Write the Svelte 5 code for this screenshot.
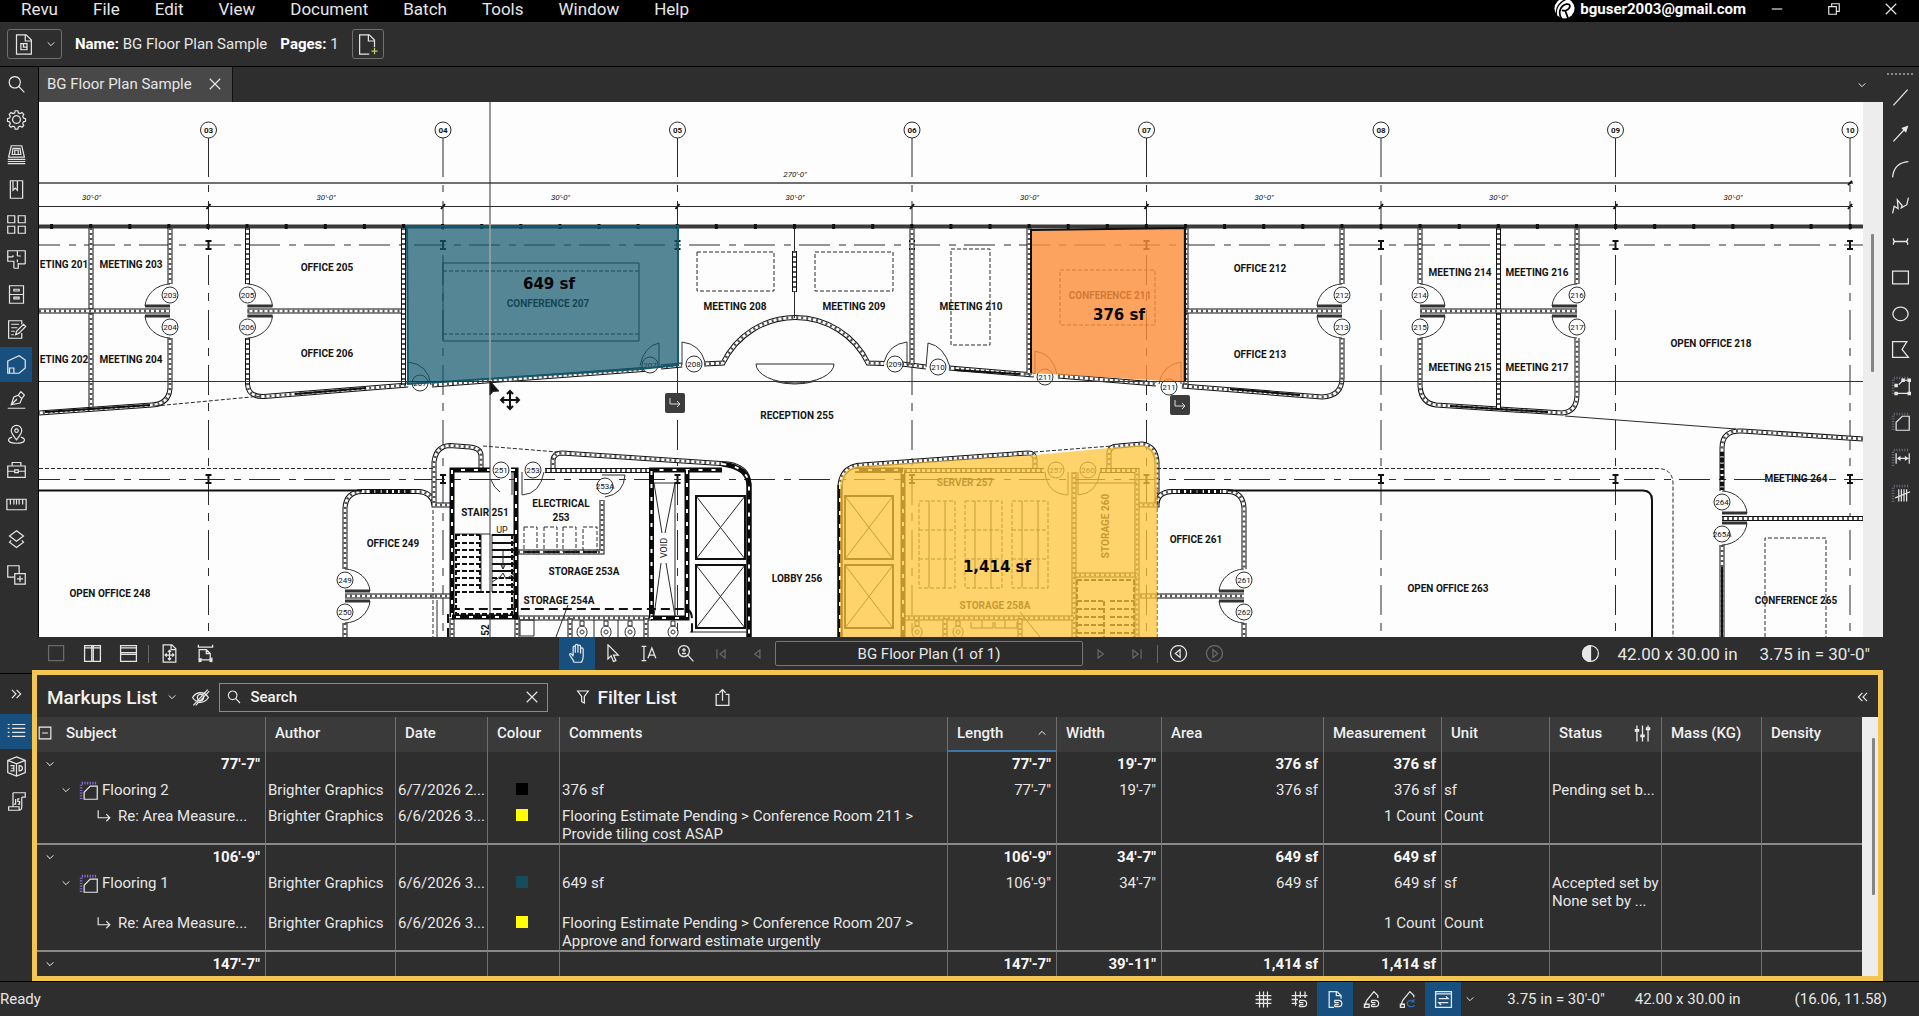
<!--
  Revu workspace — plan canvas with tool rails, page navigation and the Markups List.
-->
<script lang="ts">
  const menus = ['Revu', 'File', 'Edit', 'View', 'Document', 'Batch', 'Tools', 'Window', 'Help'];

  // Stroke paths on a 24px grid.
  const icons: Record<string, string> = {
    search: 'M10 3a6.5 6.5 0 1 0 .01 0M14.8 14.5L21 21',
    gear: 'M12 7.500a4.500 4.500 0 1 0 .01 0M10.500 2h3l.6 2.500 2 .8 2.200-1.300 2 2-1.200 2.300.8 2 2.400.7v3l-2.400.7-.8 2 1.200 2.200-2 2-2.200-1.200-2 .8-.6 2.500h-3l-.6-2.500-2-.8-2.200 1.200-2-2 1.200-2.200-.8-2L1.700 14v-3l2.400-.7.8-2L3.700 6l2-2 2.200 1.300 2-.8z',
    stamp: 'M6 2h12l3 13H3zM8 5h8l1 7H7zM10 7h4v5h-4zM2 17.500h20M2 20h20M2 22.500h20',
    bookmark: 'M5 2h14v20H5zM8 2v11l2.500-2.500L13 13V2',
    thumbs: 'M2 2h8v8H2zM14 2h8v8h-8zM2 14h8v8H2zM14 14h8v8h-8z',
    spaces: 'M22 17h-5M22 17V2H2v12h4M13 12v3M2 14v-1M9 22v-8H5M9 22h5v-5h3M13 2v6M8 7v2M13 8h4M2 9h6M14 17v-1',
    cabinet: 'M4 2h16v20H4zM4 12h16M9 6h6v2H9zM9 15h6v2H9z',
    form: 'M18 6V2H3v20h15v-6M6 6h9M6 10h7M6 14h4M6 18h3M11 18l1-4 8-8 2.500 2.500-8 8z',
    measure: 'M2 8L15 2l7 5v9l-7 6H2zM4 22v-6h5v6',
    pen: 'M2 22h20M6 18l3-9 5-2 4 4-2 5zM14 7l3-4 4 4-3 4M6 18l6-6M12 11v2',
    pin: 'M12 18c-4-5-6-7-6-10.500a6 6 0 0 1 12 0c0 3.500-2 5.500-6 10.500zM12 5.500a2 2 0 1 0 .01 0M7 15c-7 2-5 7 5 7s12-5 5-7',
    toolbox: 'M2 8h20v13H2zM7 8V4h10v4M2 14h8M14 14h8M10 12.500h4v3h-4z',
    ruler: 'M1 6h22v12H1zM5 6v6M9 6v6M12 6v6M15 6v6M19 6v6',
    layers: 'M12 2l8 6-8 6-8-6zM6 13l-2 2 8 6 8-6-2-2',
    sets: 'M10 15H2V2h13v9M10 11h12v12H10zM16 13.500v7M12.500 17h7',
    list: 'M2 4h2M2 8.500h2M2 13h2M2 17.500h2M7 4h15M7 8.500h15M7 13h15M7 17.500h15',
    cube: 'M12 1l10 4v14l-10 4-10-4V5zM2 5l10 4 10-4M12 9v14M5 11h4v6H5M6 14h3M15 11v6c5 0 5-6 0-6z',
    script: 'M8 2h14v5h-4M8 2v16H3v4h12c3 0 3-2 3-4V7M8 18h7v4M11 9v6H9M15.500 9h-2v3h2v3h-2',
    line: 'M3 22L21 2',
    arrow: 'M3 22L17 7',
    arc: 'M2 22C3 10 9 3 22 2',
    polyline: 'M2 22l2-9 5 3-1-11 6 7-1 3 7-4 2-9',
    dimension: 'M3 12h18M3 8v2l2 2-2 2v2M21 8v2l-2 2 2 2v2',
    rect: 'M2 4h20v16H2z',
    ellipse: 'M12 4a9.500 8.500 0 1 0 .01 0',
    polygon: 'M2 2h18l-6 10 8 10H2z',
    chevron: 'M4 8l8 8 8-8',
    up: 'M4 16l8-8 8 8',
    close: 'M3 3l18 18M21 3L3 21',
    page: 'M4 1h11l6 6v16H4zM14 1v7h7',
    hidden: 'M2 12c5-8 15-8 20 0-5 8-15 8-20 0zM12 8a4 4 0 1 0 .01 0M3 22L21 2M6 22L23 4',
    funnel: 'M4 3h16l-6 8v10l-4-2v-8z',
    share: 'M8 8H4v14h16V8h-4M12 16V2M8 6l4-4 4 4',
    sliders: 'M5 2v20M12 2v20M19 2v20M3 7h4v2H3zM10 14h4v2h-4zM17 5h4v2h-4z',
    square: 'M2 2h19v19H2z',
    vsplit: 'M2 2h20v20H2zM11 2v20M13 2v20M2 5h20',
    hsplit: 'M2 2h20v20H2zM2 11h20M2 13h20M2 5h20',
    fitPage: 'M4 1h11l5 5v17H4zM14 1v6h6M12 8v12M6.500 14h11M10 10l2-2 2 2M10 18l2 2 2-2M8.500 12l-2 2 2 2M15.500 12l2 2-2 2',
    fitWidth: 'M3 1v3h18V1M4 17V7h9l5 5v6M13 7v5h5M4 17v6M20 17v6M4 20h16M7 18l-3 2 3 2M17 18l3 2-3 2',
    hand: 'M8 22c-1-4-5-7-5-9 1-2 3 0 4 2V5c0-2 2.500-2 2.500 0v6-8c0-2 3-2 3 0v8-7c0-2 3-2 3 0v8-5c0-2 3-2 3 0v8c0 4-1 5-2 7z',
    pointer: 'M5 1v18l4-4 3 7 3-1-3-7h6z',
    textSelect: 'M2 3h6M5 3v18M2 21h6M10 18l5-13 5 13M12 14h6',
    zoom: 'M10 2a7 7 0 1 0 .01 0M15 14l7 8M10 5v5M7.500 7.500h5M7.500 12h5',
    first: 'M5 4v16M19 5l-9 7 9 7z',
    prev: 'M17 5l-9 7 9 7z',
    next: 'M7 5l9 7-9 7z',
    last: 'M19 4v16M5 5l9 7-9 7z',
    back: 'M12 2a10 10 0 1 0 .01 0M14 7l-6 5 6 5z',
    forward: 'M12 2a10 10 0 1 0 .01 0M10 7l6 5-6 5z',
    grid: 'M7 2v20M12 2v20M17 2v20M2 7h20M2 12h20M2 17h20',
    snapGrid: 'M7 2v18M13 2v8M19 2v8M2 7h20M2 12h8M2 17h7M12 13h5a4 4 0 0 1 0 8h-5M12 16h5M12 18.500h5M12 13v3M12 18.500V21',
    snapPage: 'M10 22H4V2h10l5 5v4M13 2v5h6M11 13h5a4 4 0 0 1 0 8h-5M11 16h5M11 18.500h5M11 13v3M11 18.500V21',
    snapMark: 'M3 21l3-8 9-11 5 5v3M3 18h6v4H3zM12 13h5a4 4 0 0 1 0 8h-5M12 16h5M12 18.500h5M12 13v3M12 18.500V21',
    reuse: 'M3 21l3-8 9-11 5 5v2M3 18h5v4H3z',
    sync: 'M2 2h20v20H2zM2 5h20M6 11h12l-3-3M18 16H6l3 3',
    right2: 'M5 5l7 7-7 7M13 5l7 7-7 7',
    left2: 'M11 5l-7 7 7 7M19 5l-7 7 7 7',
    reply: 'M2 2v13h19M16 9l6 6-6 6',
    minus: 'M3 12h18',
    restore: 'M3 8h13v13H3zM8 8V3h13v13h-5',
    collapse: 'M2 2h20v20H2zM7 12h10',
  };

  const panels = [
    ['search', 'Search'], ['gear', 'Properties'], ['stamp', 'Tool Chest'], ['bookmark', 'Bookmarks'],
    ['thumbs', 'Thumbnails'], ['spaces', 'Spaces'], ['cabinet', 'File Access'], ['form', 'Forms'],
    ['measure', 'Measurements'], ['pen', 'Signatures'], ['pin', 'Places'], ['toolbox', 'Studio'],
    ['ruler', 'Scale'], ['layers', 'Layers'], ['sets', 'Sets'],
  ];

  const tools = [
    ['line', 'Line'], ['arrow', 'Arrow'], ['arc', 'Arc'], ['polyline', 'Polyline'],
    ['dimension', 'Dimension'], ['rect', 'Rectangle'], ['ellipse', 'Ellipse'], ['polygon', 'Polygon'],
  ];

  // Measurement tools share the little ruler ticks along the top and left.
  // The last entry holds the filled parts.
  const measureTools = [
    ['M10 11l5-5h7v15H7', 'Perimeter', 'M5 10h4v4H5zM13 4h4v4h-4zM20 4h4v4h-4zM5 19h4v4H5zM20 19h4v4h-4z'],
    ['M14 6h8v16H7v-9z', 'Area', ''],
    ['M7 7v12M22 7v12M9 13h12', 'Length', 'M8 13l4-3v6zM21 13l-4-3v6z'],
    ['M10 7v14M13 7v14M16 7v14M19 7v14M6 17L23 10', 'Count', ''],
  ];
  const ticks = 'M5 2v3M8 2v3M11 2v3M14 2v3M17 2v3M20 2v3M2 6h3M2 9h3M2 12h3M2 15h3M2 18h3M2 21h3';

  let activePanel = $state('measure');

  const cols = [208.5, 443, 677.5, 912, 1146.5, 1381, 1615.5, 1850];
  const colNames = ['03', '04', '05', '06', '07', '08', '09', '10'];
  const mullions = Array.from({ length: 47 }, (_, i) => 51.6 + i * 39.1);

  const walls = [
    'M91 228V408', 'M170 228V284', 'M170 338V388Q169 404 152 405L39 413', 'M39 311H170',
    'M247.500 228V284', 'M247.500 338V384Q248 397 264 396.500L408 385', 'M247.500 311H403', 'M403.500 228V385',
    'M432 385L650 369', 'M661 367L682 365', 'M704 364L723 363A80.500 80.500 0 0 1 868 363L884 363.500',
    'M902 364L926 367', 'M794.500 251V292', 'M912 228V365', 'M949 368L1034 375', 'M1029 228V375',
    'M1058 376L1156 384', 'M1182 386L1322 397Q1342 396 1342 378V338', 'M1186 228V385', 'M1186 311H1342',
    'M1342 228V284', 'M1420 228V284', 'M1420 338V386Q1421 403 1436 405L1562 413Q1577 412 1577 394V338',
    'M1577 228V284', 'M1498.500 228V408', 'M1420 311H1577', 'M1863 439L1742 431Q1722 430 1722 448V491',
    'M1722 518.500H1863', 'M1722 545V637', 'M345 569V508Q346 492 362 491.500H418Q432 492 434 505',
    'M452 505H434V462Q436 446 450 445.500L470 447Q481 448 481 456V470', 'M345 596H452', 'M345 623V637',
    'M553 470V460Q554 453 562 453L728 464Q748 467 749 484V637', 'M545 470.500H652', 'M518 552H602V500',
    'M518 618H652', 'M570 618V637', 'M646 618V637', 'M452 618V637', 'M517 618V637',
    'M840 637V485Q842 466 862 465L1028 453Q1035 453 1035 460V470', 'M855 470.500H1044', 'M1109 470V452Q1110 446 1118 446L1142 444Q1156 446 1157 462V505H1138',
    'M1100 470.500H1137V637', 'M1074 472V637', 'M1074 575H1137', 'M903 618H1074', 'M945 618V637', 'M1020 618V637',
    'M1140 596H1244', 'M1157 503Q1158 492 1172 491.500H1228Q1243 492 1244 508V569', 'M1244 623V637',
  ];

  // Fire-rated walls are drawn solid with a broken white core.
  const ratedWalls = [
    'M452 617V470H490', 'M511 470H516V617H452', 'M651.500 618V470H722', 'M687 470V618H651', 'M903 470V637',
    'M722 464Q748 467 749 485V637', 'M840 485V637', 'M855 470H903',
  ];

  // Paired doors either side of a partition; dir points into the room.
  const doorPairs = [
    { x: 170, y: 311, dir: -1, a: '203', b: '204' },
    { x: 247.5, y: 311, dir: 1, a: '205', b: '206' },
    { x: 1342, y: 311, dir: -1, a: '212', b: '213' },
    { x: 1420, y: 311, dir: 1, a: '214', b: '215' },
    { x: 1577, y: 311, dir: -1, a: '216', b: '217' },
    { x: 345, y: 596, dir: 1, a: '249', b: '250' },
    { x: 1244, y: 596, dir: -1, a: '261', b: '262' },
    { x: 1722, y: 518, dir: 1, a: '264', b: '265A' },
  ];

  const doors = [
    { x: 420, y: 383, n: '207', d: 'M408 362Q428 364 431 385' },
    { x: 650, y: 365, n: '207', d: 'M659 368V343Q644 346 640 366' },
    { x: 694, y: 364, n: '208', d: 'M682 365V342Q700 344 705 362' },
    { x: 895, y: 364, n: '209', d: 'M907 365V342Q889 344 884 362' },
    { x: 938, y: 367, n: '210', d: 'M926 367L928 343Q944 346 950 367' },
    { x: 1045, y: 377, n: '211', d: 'M1035 374V351Q1053 354 1057 374' },
    { x: 1169, y: 387, n: '211', d: 'M1181 384V362Q1162 365 1159 384' },
    { x: 501, y: 470, n: '251', d: 'M512 472V495M491 480Q494 488 500 492' },
    { x: 533, y: 470, n: '253', d: 'M522 472V495Q540 494 544 472' },
    { x: 605, y: 486, n: '253A', d: 'M602 475H625Q624 494 605 497' },
    { x: 1056, y: 470, n: '257', d: 'M1068 472V495Q1047 494 1045 472' },
    { x: 1088, y: 470, n: '260', d: 'M1078 472V495Q1097 494 1100 472' },
  ];

  const rooms: [string, number, number][] = [
    ['ETING 201', 64, 264], ['MEETING 203', 131, 264], ['ETING 202', 64, 359], ['MEETING 204', 131, 359],
    ['OFFICE 205', 327, 267], ['OFFICE 206', 327, 353], ['CONFERENCE 207', 548, 303], ['MEETING 208', 735, 306],
    ['MEETING 209', 854, 306], ['MEETING 210', 971, 306], ['CONFERENCE 211', 1110, 295], ['OFFICE 212', 1260, 268],
    ['OFFICE 213', 1260, 354], ['MEETING 214', 1460, 272], ['MEETING 216', 1537, 272], ['MEETING 215', 1460, 367],
    ['MEETING 217', 1537, 367], ['OPEN OFFICE 218', 1711, 343], ['RECEPTION 255', 797, 415], ['OPEN OFFICE 248', 110, 593],
    ['OFFICE 249', 393, 543], ['STAIR 251', 485, 512], ['ELECTRICAL', 561, 503], ['253', 561, 517],
    ['STORAGE 253A', 584, 571], ['STORAGE 254A', 559, 600], ['LOBBY 256', 797, 578], ['SERVER 257', 965, 482],
    ['STORAGE 258A', 995, 605], ['OFFICE 261', 1196, 539], ['OPEN OFFICE 263', 1448, 588], ['MEETING 264', 1796, 478],
    ['CONFERENCE 265', 1796, 600],
  ];

  const stairTreads = [535, 543, 550, 557, 564, 571, 578, 585, 592];
  const fixtures = [582, 606, 630, 673, 917, 958];

  interface Row {
    kind: 'group' | 'markup' | 'reply';
    subject: string;
    author?: string;
    date?: string;
    colour?: string;
    comments?: string[];
    length?: string;
    width?: string;
    area?: string;
    measurement?: string;
    unit?: string;
    status?: string[];
  }

  const rows: Row[] = [
    { kind: 'group', subject: `77'-7"`, length: `77'-7"`, width: `19'-7"`, area: '376 sf', measurement: '376 sf' },
    { kind: 'markup', subject: 'Flooring 2', author: 'Brighter Graphics', date: '6/7/2026 2...', colour: '#000000', comments: ['376 sf'], length: `77'-7"`, width: `19'-7"`, area: '376 sf', measurement: '376 sf', unit: 'sf', status: ['Pending set b...'] },
    { kind: 'reply', subject: 'Re: Area Measure...', author: 'Brighter Graphics', date: '6/6/2026 3...', colour: '#ffff00', comments: ['Flooring Estimate Pending > Conference Room 211 >', 'Provide tiling cost ASAP'], measurement: '1 Count', unit: 'Count' },
    { kind: 'group', subject: `106'-9"`, length: `106'-9"`, width: `34'-7"`, area: '649 sf', measurement: '649 sf' },
    { kind: 'markup', subject: 'Flooring 1', author: 'Brighter Graphics', date: '6/6/2026 3...', colour: '#154d5d', comments: ['649 sf'], length: `106'-9"`, width: `34'-7"`, area: '649 sf', measurement: '649 sf', unit: 'sf', status: ['Accepted set by', 'None set by ...'] },
    { kind: 'reply', subject: 'Re: Area Measure...', author: 'Brighter Graphics', date: '6/6/2026 3...', colour: '#ffff00', comments: ['Flooring Estimate Pending > Conference Room 207 >', 'Approve and forward estimate urgently'], measurement: '1 Count', unit: 'Count' },
    { kind: 'group', subject: `147'-7"`, length: `147'-7"`, width: `39'-11"`, area: '1,414 sf', measurement: '1,414 sf' },
  ];

  let query = $state('');
</script>

{#snippet icon(name: string, size: string = 'md')}
  <svg class="icon icon--{size}" viewBox="0 0 24 24" aria-hidden="true"><path d={icons[name]} /></svg>
{/snippet}

{#snippet tag(x: number, y: number, n: string)}
  <circle class="tag" cx={x} cy={y} r="8" />
  <text class="tag-text" x={x} y={y + 3}>{n}</text>
{/snippet}

<div class="app">
  <header class="titlebar">
    <nav class="menus">
      {#each menus as m}<button type="button">{m}</button>{/each}
    </nav>
    <div class="account">
      <svg class="logo" viewBox="0 0 24 24" aria-hidden="true">
        <circle cx="12" cy="12" r="11.500" fill="#fff" />
        <path d="M9 24C4 17 7 9 14 7c6-1 5 5 0 7-3 1-5 0-5 0M13 15l3 8" fill="none" stroke="#000" stroke-width="2" />
        <path d="M3 20C1 11 7 4 15 1" fill="none" stroke="#000" stroke-width="1.500" />
      </svg>
      <span>bguser2003@gmail.com</span>
    </div>
    <div class="window-buttons">
      <button type="button" aria-label="Minimize">{@render icon('minus', 'xs')}</button>
      <button type="button" aria-label="Restore">{@render icon('restore', 'xs')}</button>
      <button type="button" aria-label="Close">{@render icon('close', 'xs')}</button>
    </div>
  </header>

  <div class="docbar">
    <button type="button" class="outlined outlined--wide" aria-label="Document">
      <svg class="icon icon--lg" viewBox="0 0 24 24" aria-hidden="true"><path d={icons.page} /><path d="M9 11h7v7H9zM12 11v4h4" /></svg>
      {@render icon('chevron', 'xxs')}
    </button>
    <p><b>Name:</b> BG Floor Plan Sample</p>
    <p><b>Pages:</b> 1</p>
    <button type="button" class="outlined" aria-label="Add page">
      <svg class="icon icon--lg" viewBox="0 0 24 24" aria-hidden="true"><path d="M14 23H3V1h11l6 6v8M13 1v7h7" /><path class="plus" d="M20 16v7M16.500 19.500h7" /></svg>
    </button>
  </div>

  <div class="workspace">
    <div class="rails">
      <div class="rail">
        {#each panels as [name, label]}
          <button type="button" class:active={activePanel === name} aria-label={label} onclick={() => (activePanel = name)}>
            {@render icon(name, 'lg')}
          </button>
        {/each}
      </div>
      <div class="rail rail--bottom">
        <button type="button" aria-label="Expand">{@render icon('right2', 'xs')}</button>
        <button type="button" class="active" aria-label="Markups">{@render icon('list', 'lg')}</button>
        <button type="button" aria-label="3D Model Tree">{@render icon('cube', 'lg')}</button>
        <button type="button" aria-label="JavaScript">{@render icon('script', 'lg')}</button>
      </div>
    </div>

    <main class="main">
      <div class="tabs">
        <div class="tab">
          <span>BG Floor Plan Sample</span>
          <button type="button" aria-label="Close tab">{@render icon('close', 'xs')}</button>
        </div>
        <button type="button" class="tabs__more" aria-label="More tabs">{@render icon('chevron', 'xxs')}</button>
      </div>

      <div class="canvas">
        <svg class="plan" viewBox="39 102 1824 535" preserveAspectRatio="xMinYMin slice" role="img" aria-label="Floor plan">
          <g class="thin">
            {#each cols as x, i}
              <circle cx={x} cy="130" r="8" />
              <text class="grid-text" x={x} y="133">{colNames[i]}</text>
              <path d="M{x} 138V177M{x} 185V192M{x} 201V230" />
              <path d="M{x} 255V637" stroke-dasharray="30 8 8 9" />
              <path class="heavy" d="M{x - 3} 241h6M{x} 241v8M{x - 3} 249h6M{x - 3} 475h6M{x} 475v8M{x - 3} 483h6" />
              <path class="heavy" d="M{x - 2} 209l4-5" />
            {/each}
            <path d="M39 206.500H1853" />
            <path class="gray" d="M39 183H1853" />
            <path d="M29 245H1863M29 479.500H1863" stroke-dasharray="31 9 7 8" />
            <path class="heavy" d="M1848 185l4-4" />
          </g>

          {#each cols as x}
            <text class="dim-text" x={x - 117} y="200">30'-0"</text>
          {/each}
          <text class="dim-text" x="795" y="177">270'-0"</text>

          <path class="facade" d="M39 226.500H1863" />
          <g class="heavy">
            {#each mullions as x}<path d="M{x} 224V229" />{/each}
          </g>

          {#each walls as d}
            <path class="wall wall--outer" {d} />
            <path class="wall wall--inner" {d} />
            <path class="wall wall--hatch" {d} />
          {/each}
          {#each ratedWalls as d}
            <path class="rated" {d} />
            <path class="rated-core" {d} />
          {/each}

          <g class="thin">
            <path d="M794.500 228V251M794.500 292V318M756 364H834A39 19 0 0 1 756 364M773 381Q795 387 816 381M1565 416L1736 429M443 263H639V341H443z" />
            <path d="M437 600V637M490 534H455M481 534V593M492 534V592M520 620h14v16h-14zM594 620V637M618 620V637M568 605L556 637M1020 612L1040 637" />
            <path d="M654 483H675V616M654 483L662 533M675 483L665 533M661 563L654 616M666 563L675 616" />
            <path d="M696 496l49 63M745 496l-49 63M696 565l49 63M745 565l-49 63M690 632H747" />
            <path d="M845 496l48 63M893 496l-48 63M845 565l48 63M893 565l-48 63" />
            <path class="lift" d="M696 496h49v63h-49zM696 565h49v63h-49zM845 496h48v63h-48zM845 565h48v63h-48z" />
            <path d="M929 501V588M945 501V588M975 501V588M991 501V588M1022 501V588M1038 501V588M1074 483H1137" />
            <path class="heavy" d="M39 490.500H362M1228 490.500H1643Q1652 491 1652 500V637M1722 567V637" />
            <path class="heavy" d="M45 412L150 405M295 394L366 388M955 370L1020 374M1230 389L1300 395M1450 406L1548 412M525 552h14M545 552h14M565 552h14M583 552h14" />
          </g>

          <g class="dash">
            <path d="M155 406L262 396M443 271H639M443 334H639M39 468.500H433M433 510V637M483 446L558 452M1034 452L1112 446" />
            <path d="M697 252h77v39h-77zM815 252h78v39h-78zM951 249h39v96h-39zM1060 270h95v55h-95z" />
            <path d="M524 527h13v25h-13zM544 527h13v25h-13zM563 527h13v25h-13zM583 527h14v25h-14z" />
            <path d="M1157 468.500H1658Q1673 469 1673 484V637M1157 490V637M1765 637V538H1826V637" />
            <path d="M919 501h36v87h-36zM965 501h37v87h-37zM1012 501h36v87h-36zM919 530h36M919 559h36M965 530h37M965 559h37M1012 530h36M1012 559h36" />
          </g>

          <g class="stairs">
            {#each stairTreads as y, i}
              <path class="tread" d="M455 {y}H480" />
              <path class={i > 5 ? 'tread' : 'step'} d="M492 {y}H515" />
            {/each}
            {#each [601, 609, 617, 625, 633] as y}
              <path class="tread" d="M1077 {y}H1103M1110 {y}H1134" />
            {/each}
            <path d="M492 582l8-5 3-4 3 6 9-6M503 551v18M500 563l3 6 3-6" />
            <path class="tread" d="M456 535V614H512V535M480 535V592H490M1077 580H1134M1077 580V637M1134 580V637M1104 601V637" />
          </g>
          <path class="rated-line" d="M448 637V614Q449 609 456 609H686Q692 610 692 620V637" />
          <path class="opening" d="M370 491.500H410M1180 491.500H1220M1722 452V490" />

          {#each fixtures as x}
            <path class="fixture" d="M{x - 2} 621h4v5h-4zM{x} 626a5 6 0 1 0 .1 0M{x} 630a2 2 0 1 0 .1 0" />
          {/each}
          <path class="fixture" d="M971 622v6h22v-6M995 622v6h22v-6M982 620v8M1005 620v8" />

          {#each doorPairs as { x, y, dir, a, b }}
            <path class="door" d="M{x} {y - 27}A26 24 0 0 {dir > 0 ? 1 : 0} {x + dir * 25} {y - 5}H{x}M{x} {y + 27}A26 24 0 0 {dir > 0 ? 0 : 1} {x + dir * 25} {y + 5}H{x}" />
            <path class="door door--leaf" d="M{x} {y - 5}h{dir * 25}M{x} {y + 5}h{dir * 25}" />
            {@render tag(x, y - 16, a)}
            {@render tag(x, y + 16, b)}
          {/each}
          {#each doors as { x, y, n, d }}
            <path class="door" {d} />
            {@render tag(x, y, n)}
          {/each}

          {#each rooms as [name, x, y]}
            <text class="room" {x} y={y + 4}>{name}</text>
          {/each}
          <text class="room" transform="translate(1109 526) rotate(-90)">STORAGE 260</text>
          <text class="room" transform="translate(489 630) rotate(-90)">52</text>
          <text class="plain" transform="translate(667 548) rotate(-90)">VOID</text>
          <text class="plain" x="502" y="533">UP</text>

          <path class="area area--teal" d="M407 226H678V365L640 369L408 384z" />
          <path class="area area--orange" d="M1031 230L1185 228L1183 382L1031 373z" />
          <path class="area area--gold" d="M840 637V485Q842 466 862 466L1034 455L1142 445Q1156 447 1157 462V637z" />
          <path class="area-edge" d="M1031 373V230L1185 228V382" />

          <text class="sf" x="549" y="289">649 sf</text>
          <text class="sf" x="1119" y="320">376 sf</text>
          <text class="sf" x="997" y="572">1,414 sf</text>

          <path class="cross" d="M39 381.500H1863M490 102V637" />
          <path class="cross cross--light" d="M490 224V381" />

          <g class="badge">
            <rect x="665" y="393" width="20" height="20" rx="2" />
            <path d="M670 398v6h10M677 401l3 3-3 3" />
            <rect x="1170" y="395" width="20" height="20" rx="2" />
            <path d="M1175 400v6h10M1182 403l3 3-3 3" />
          </g>
          <path class="cursor" d="M490 381V395L493 391.500L499 391z" />
          <path class="move" d="M510 392V408M502 400H518M507 394l3-3 3 3M507 406l3 3 3-3M504 397l-3 3 3 3M516 397l3 3-3 3" />
        </svg>
        <div class="scroll scroll--canvas"><span></span></div>
      </div>

      <div class="navbar">
        <div class="navbar__views">
          <button type="button" class="dim" aria-label="Single view">{@render icon('square')}</button>
          <button type="button" aria-label="Split vertical">{@render icon('vsplit')}</button>
          <button type="button" aria-label="Split horizontal">{@render icon('hsplit')}</button>
          <i class="sep"></i>
          <button type="button" aria-label="Fit page">{@render icon('fitPage')}</button>
          <button type="button" aria-label="Fit width">{@render icon('fitWidth')}</button>
        </div>
        <div class="navbar__pages">
          <button type="button" class="active" aria-label="Pan">{@render icon('hand', 'lg')}</button>
          <button type="button" aria-label="Select">{@render icon('pointer')}</button>
          <button type="button" aria-label="Select text">{@render icon('textSelect')}</button>
          <button type="button" aria-label="Zoom">{@render icon('zoom')}</button>
          <button type="button" class="dim" aria-label="First page">{@render icon('first', 'xs')}</button>
          <button type="button" class="dim" aria-label="Previous page">{@render icon('prev', 'xs')}</button>
          <input type="text" aria-label="Page" value="BG Floor Plan (1 of 1)" />
          <button type="button" class="dim" aria-label="Next page">{@render icon('next', 'xs')}</button>
          <button type="button" class="dim" aria-label="Last page">{@render icon('last', 'xs')}</button>
          <i class="sep"></i>
          <button type="button" aria-label="Previous view">{@render icon('back')}</button>
          <button type="button" class="dim" aria-label="Next view">{@render icon('forward')}</button>
        </div>
        <div class="navbar__info">
          <svg class="icon icon--md" viewBox="0 0 24 24" aria-hidden="true"><circle cx="12" cy="12" r="10" /><path d="M12 2a10 10 0 0 0 0 20z" fill="currentColor" /></svg>
          <span>42.00 x 30.00 in</span>
          <span>3.75 in = 30'-0"</span>
        </div>
      </div>

      <section class="markups">
        <div class="markups__bar">
          <h2>Markups List</h2>
          <button type="button" class="caret" aria-label="List options">{@render icon('chevron', 'xxs')}</button>
          <button type="button" class="eye" aria-label="Hide markups">{@render icon('hidden')}</button>
          <label class="search">
            {@render icon('search', 'sm')}
            <input type="text" placeholder="Search" aria-label="Search" bind:value={query} />
            <button type="button" aria-label="Clear" onclick={() => (query = '')}>{@render icon('close', 'xs')}</button>
          </label>
          <button type="button" class="filter">{@render icon('funnel', 'sm')}Filter List</button>
          <button type="button" class="export" aria-label="Export">{@render icon('share')}</button>
          <button type="button" class="fold" aria-label="Collapse panel">{@render icon('left2', 'xs')}</button>
        </div>

        <div class="markups__body">
          <div class="table-wrap">
            <table>
              <colgroup>
                <col class="c-subject" /><col class="c-author" /><col class="c-date" /><col class="c-colour" /><col />
                <col class="c-length" /><col class="c-width" /><col class="c-area" /><col class="c-measure" />
                <col class="c-unit" /><col class="c-status" /><col class="c-mass" /><col class="c-density" />
              </colgroup>
              <thead>
                <tr>
                  <th class="subject-head"><div>{@render icon('collapse', 'xs')}Subject</div></th>
                  <th>Author</th>
                  <th>Date</th>
                  <th>Colour</th>
                  <th>Comments</th>
                  <th class="sorted"><div>Length{@render icon('up', 'xxs')}</div></th>
                  <th>Width</th>
                  <th>Area</th>
                  <th>Measurement</th>
                  <th>Unit</th>
                  <th><div>Status{@render icon('sliders')}</div></th>
                  <th>Mass (KG)</th>
                  <th>Density</th>
                </tr>
              </thead>
              <tbody>
                {#each rows as row}
                  <tr class={row.kind}>
                    <td>
                      {#if row.kind === 'group'}
                        <div class="subject">{@render icon('chevron', 'xxs')}<span class="total">{row.subject}</span></div>
                      {:else if row.kind === 'markup'}
                        <div class="subject">
                          {@render icon('chevron', 'xxs')}
                          <svg class="icon icon--lg area-icon" viewBox="0 0 24 24" aria-hidden="true"><path class="ticks" d={ticks} /><path d="M14 7h8v15H7v-8z" /></svg>
                          <span>{row.subject}</span>
                        </div>
                      {:else}
                        <div class="subject">{@render icon('reply', 'xs')}<span>{row.subject}</span></div>
                      {/if}
                    </td>
                    <td>{row.author ?? ''}</td>
                    <td>{row.date ?? ''}</td>
                    <td class="swatch-cell">{#if row.colour}<span class="swatch" style="background: {row.colour}"></span>{/if}</td>
                    <td>{#each row.comments ?? [] as line}<div>{line}</div>{/each}</td>
                    <td class="num">{row.length ?? ''}</td>
                    <td class="num">{row.width ?? ''}</td>
                    <td class="num">{row.area ?? ''}</td>
                    <td class="num">{row.measurement ?? ''}</td>
                    <td>{row.unit ?? ''}</td>
                    <td>{#each row.status ?? [] as line}<div>{line}</div>{/each}</td>
                    <td></td>
                    <td></td>
                  </tr>
                {/each}
              </tbody>
            </table>
          </div>
          <div class="scroll scroll--list"><span></span></div>
        </div>
      </section>
    </main>

    <div class="toolrail">
      <i class="grip"></i>
      {#each tools as [name, label]}
        <button type="button" aria-label={label}>
          <svg class="icon icon--md" viewBox="0 0 24 24" aria-hidden="true">
            <path d={icons[name]} />
            {#if name === 'arrow'}<path class="solid" d="M22 2l-3 9-6-6z" />{/if}
          </svg>
        </button>
      {/each}
      {#each measureTools as [d, label, solid]}
        <button type="button" aria-label={label}>
          <svg class="icon icon--lg" viewBox="0 0 24 24" aria-hidden="true">
            <path class="faint" d={ticks} />
            <path {d} />
            <path class="solid" d={solid} />
          </svg>
        </button>
      {/each}
    </div>
  </div>

  <footer class="status">
    <span class="status__ready">Ready</span>
    <button type="button" aria-label="Show grid">{@render icon('grid', 'md')}</button>
    <button type="button" aria-label="Snap to grid">{@render icon('snapGrid')}</button>
    <button type="button" class="active" aria-label="Snap to content">{@render icon('snapPage')}</button>
    <button type="button" aria-label="Snap to markup">{@render icon('snapMark')}</button>
    <button type="button" aria-label="Reuse">
      <svg class="icon icon--md" viewBox="0 0 24 24" aria-hidden="true"><path d={icons.reuse} /><path class="blue" d="M20 14a5 4 0 1 0 1 5M20 11v4h-4" /></svg>
    </button>
    <button type="button" class="active" aria-label="Sync views">{@render icon('sync')}</button>
    <button type="button" class="status__caret" aria-label="Sync options">{@render icon('chevron', 'xxs')}</button>
    <span class="status__scale">3.75 in = 30'-0"</span>
    <span class="status__size">42.00 x 30.00 in</span>
    <span class="status__pos">(16.06, 11.58)</span>
  </footer>
</div>

<style>
  :global(body) {
    margin: 0;
    background: #2e2e2e;
  }

  .app {
    --bg: #2e2e2e;
    --blue: #17507f;
    display: flex;
    flex-direction: column;
    height: 100vh;
    overflow: hidden;
    background: var(--bg);
    color: #e6e6e6;
    font-family: Roboto, 'Liberation Sans', sans-serif;
    font-size: 15px;
  }

  button {
    display: flex;
    align-items: center;
    justify-content: center;
    padding: 0;
    border: 0;
    background: transparent;
    color: inherit;
    font: inherit;
  }

  .active {
    background: var(--blue);
  }

  .dim {
    color: #6a6a6a;
  }

  .icon {
    flex: none;
    fill: none;
    stroke: currentColor;
    stroke-width: 1.4;
  }

  .icon--xxs {
    width: 10px;
    height: 10px;
    stroke-width: 2.4;
  }

  .icon--xs {
    width: 14px;
    height: 14px;
    stroke-width: 2;
  }

  .icon--sm {
    width: 16px;
    height: 16px;
    stroke-width: 1.8;
  }

  .icon--md {
    width: 19px;
    height: 19px;
    stroke-width: 1.6;
  }

  .icon--lg {
    width: 21px;
    height: 21px;
  }

  .solid {
    fill: currentColor;
    stroke: none;
  }

  .titlebar {
    display: flex;
    flex: none;
    height: 22px;
    background: #000;
    line-height: 18px;
  }

  .menus {
    display: flex;
    flex: 1;
    gap: 35px;
    padding-left: 21px;
    height: 18px;
    font-size: 17px;
  }

  .account {
    display: flex;
    gap: 5px;
    height: 18px;
    padding-right: 2px;
    color: #fff;
    font-size: 15px;
    font-weight: 700;
  }

  .logo {
    width: 21px;
    height: 21px;
    margin-top: -2px;
  }

  .window-buttons {
    display: flex;
    height: 18px;
  }

  .window-buttons button {
    width: 57px;
  }

  .docbar {
    display: flex;
    flex: none;
    align-items: center;
    gap: 13px;
    height: 44px;
    padding-left: 7px;
    border-bottom: 1px solid #000;
  }

  .docbar p {
    margin: 0;
  }

  .docbar b {
    color: #fff;
    font-weight: 700;
  }

  .outlined {
    width: 32px;
    height: 30px;
    border: 1px solid #707070;
    border-radius: 3px;
  }

  .outlined--wide {
    gap: 12px;
    width: 55px;
  }

  .plus {
    stroke: #c5c96a;
  }

  .workspace {
    display: flex;
    flex: 1;
    min-height: 0;
  }

  .rails {
    display: flex;
    flex: none;
    flex-direction: column;
    width: 32px;
  }

  .rail {
    flex: 1;
    border-bottom: 1px solid #000;
  }

  .rail button {
    width: 32px;
    height: 35px;
  }

  .rail--bottom {
    flex: none;
    height: 307px;
    border-bottom: 0;
  }

  .rail--bottom button:first-child {
    height: 40px;
  }

  .main {
    display: flex;
    flex: 1;
    flex-direction: column;
    min-width: 0;
  }

  .tabs {
    display: flex;
    flex: none;
    align-items: center;
    justify-content: space-between;
    height: 35px;
    margin-left: 6px;
    border-left: 1px solid #000;
  }

  .tab {
    display: flex;
    align-items: center;
    justify-content: space-between;
    box-sizing: border-box;
    width: 194px;
    height: 35px;
    padding: 0 10px 2px 8px;
    border-right: 1px solid #111;
    background: #484848;
  }

  .tabs__more {
    margin-right: 16px;
  }

  .canvas {
    display: flex;
    flex: 1;
    min-height: 0;
    margin-left: 6px;
    border-left: 1px solid #000;
    background: #fdfdfd;
  }

  .plan {
    flex: 1;
    min-width: 0;
    width: 100%;
    height: 100%;
    color: #1a1a1a;
  }

  .plan path,
  .plan circle {
    fill: none;
    stroke: #2a2a2a;
  }

  .plan .gray {
    stroke: #707070;
    stroke-width: 2;
  }

  .plan .heavy,
  .plan .heavy path {
    stroke: #111;
    stroke-width: 2;
  }

  .plan .facade {
    stroke: #3a3a3a;
    stroke-width: 4;
  }

  .plan .heavy path {
    stroke-width: 3;
  }

  .plan .wall--outer {
    stroke: #111;
    stroke-width: 5;
  }

  .plan .wall--inner {
    stroke: #fff;
    stroke-width: 3;
  }

  .plan .wall--hatch {
    stroke: #555;
    stroke-width: 3;
    stroke-dasharray: 2 3;
  }

  .plan .rated {
    stroke: #0a0a0a;
    stroke-width: 5;
  }

  .plan .rated-core {
    stroke: #fff;
    stroke-width: 2;
    stroke-dasharray: 4 9;
  }

  .plan .rated-line {
    stroke: #111;
    stroke-width: 2;
    stroke-dasharray: 9 5;
  }

  .plan .lift {
    stroke: #111;
    stroke-width: 2;
  }

  .plan .opening {
    stroke: #111;
    stroke-width: 4;
    stroke-dasharray: 4 2;
  }

  .plan .dash path {
    stroke-dasharray: 4 2;
  }

  .plan .stairs .tread {
    stroke: #111;
    stroke-width: 2;
    stroke-dasharray: 5 2;
  }

  .plan .stairs .step {
    stroke: #111;
    stroke-width: 2;
  }

  .plan .door {
    stroke: #333;
  }

  .plan .door--leaf {
    stroke-width: 3;
  }

  .plan .tag {
    fill: #fdfdfd;
    stroke: #333;
  }

  .plan text {
    fill: #141414;
    font-family: Roboto, 'Liberation Sans', sans-serif;
    text-anchor: middle;
  }

  .plan .room {
    font-size: 10px;
    font-weight: 700;
  }

  .plan .grid-text {
    font-size: 8px;
    font-weight: 700;
  }

  .plan .tag-text {
    font-size: 8px;
  }

  .plan .dim-text {
    font-size: 8px;
    font-style: italic;
  }

  .plan .plain {
    font-size: 9px;
  }

  .plan .sf {
    fill: #050505;
    font-family: 'DejaVu Sans', sans-serif;
    font-size: 15px;
    font-weight: 700;
  }

  .plan .area {
    stroke: none;
  }

  .plan .area--teal {
    fill: #13586c;
    fill-opacity: 0.72;
    stroke: #13586c;
    stroke-width: 2;
  }

  .plan .area--orange {
    fill: #fb8f3c;
    fill-opacity: 0.82;
  }

  .plan .area--gold {
    fill: #ffc43b;
    fill-opacity: 0.75;
  }

  .plan .area-edge {
    stroke: #111;
    stroke-width: 2;
  }

  .plan .cross {
    stroke: #333;
  }

  .plan .cross--light {
    stroke: #d8dcde;
  }

  .badge rect {
    fill: #3c3c3c;
  }

  .plan .badge path {
    stroke: #ddd;
  }

  .plan .cursor {
    fill: #111;
  }

  .plan .move {
    stroke: #111;
    stroke-width: 2;
  }

  .scroll {
    flex: none;
    background: #ededed;
  }

  .scroll span {
    display: block;
    width: 3px;
    border-radius: 1px;
    background: #858585;
  }

  .scroll--canvas {
    width: 20px;
  }

  .scroll--canvas span {
    height: 138px;
    margin: 132px 0 0 8px;
  }

  .scroll--list {
    width: 16px;
  }

  .scroll--list span {
    height: 157px;
    margin: 21px 0 0 10px;
  }

  .navbar {
    display: flex;
    flex: none;
    align-items: stretch;
    height: 33px;
    margin-left: 6px;
    font-size: 17px;
  }

  .navbar__views {
    display: flex;
    width: 521px;
  }

  .navbar__pages {
    display: flex;
    align-items: center;
  }

  .navbar button {
    width: 36px;
    height: 33px;
  }

  .navbar input {
    box-sizing: border-box;
    width: 308px;
    height: 25px;
    border: 1px solid #777;
    border-radius: 2px;
    background: #2a2a2a;
    color: #e6e6e6;
    font: inherit;
    font-size: 15px;
    text-align: center;
  }

  .sep {
    align-self: center;
    width: 1px;
    height: 18px;
    margin: 0 2px;
    background: #666;
  }

  .navbar__info {
    display: flex;
    flex: 1;
    align-items: center;
    justify-content: flex-end;
    gap: 22px;
    padding-right: 13px;
  }

  .navbar__info .icon {
    margin-right: -4px;
  }

  .markups {
    display: flex;
    flex: none;
    flex-direction: column;
    box-sizing: border-box;
    height: 311px;
    border: 5px solid #f3c553;
  }

  .markups__bar {
    display: flex;
    flex: none;
    align-items: center;
    box-sizing: border-box;
    height: 42px;
    padding: 2px 8px 0 10px;
  }

  .markups h2 {
    margin: 0;
    color: #f2f2f2;
    font-size: 19px;
    font-weight: 500;
  }

  .caret {
    margin: 0 14px 0 10px;
  }

  .search {
    display: flex;
    align-items: center;
    gap: 8px;
    box-sizing: border-box;
    width: 329px;
    height: 29px;
    margin-left: 9px;
    padding: 0 8px 0 6px;
    border: 1px solid #8a8a8a;
  }

  .search input {
    flex: 1;
    min-width: 0;
    padding: 0;
    border: 0;
    outline: 0;
    background: transparent;
    color: #f2f2f2;
    font: inherit;
    font-weight: 500;
  }

  .search input::placeholder {
    color: #f2f2f2;
    opacity: 1;
  }

  .filter {
    gap: 6px;
    margin-left: 27px;
    color: #f2f2f2;
    font-size: 19px;
    font-weight: 500;
  }

  .export {
    margin-left: 36px;
  }

  .fold {
    margin-left: auto;
  }

  .markups__body {
    display: flex;
    flex: 1;
    min-height: 0;
    overflow: hidden;
  }

  .table-wrap {
    flex: 1;
    min-width: 0;
  }

  table {
    width: 100%;
    border-collapse: separate;
    border-spacing: 0;
    table-layout: fixed;
    font-size: 15px;
    line-height: 18px;
  }

  .c-subject {
    width: 229px;
  }

  .c-author {
    width: 130px;
  }

  .c-date {
    width: 92px;
  }

  .c-colour {
    width: 72px;
  }

  .c-length {
    width: 109px;
  }

  .c-width {
    width: 105px;
  }

  .c-area {
    width: 162px;
  }

  .c-measure {
    width: 118px;
  }

  .c-unit {
    width: 108px;
  }

  .c-status {
    width: 112px;
  }

  .c-mass {
    width: 100px;
  }

  .c-density {
    width: 100px;
  }

  th,
  td {
    box-sizing: border-box;
    border-right: 1px solid #6f6f6f;
    white-space: nowrap;
  }

  th {
    height: 35px;
    padding: 0 9px 3px;
    background: #3a3a3a;
    color: #f0f0f0;
    font-weight: 500;
    text-align: left;
  }

  th:last-child,
  td:last-child {
    border-right: 0;
  }

  th div {
    display: flex;
    align-items: center;
    justify-content: space-between;
    height: 18px;
  }

  .subject-head {
    padding-left: 1px;
  }

  .subject-head div {
    gap: 14px;
    justify-content: flex-start;
  }

  .sorted {
    box-shadow: inset 0 -2px #3c76a8;
  }

  td {
    height: 26px;
    padding: 4px 5px 0 2px;
    vertical-align: top;
  }

  .group td {
    height: 25px;
    padding-top: 3px;
    color: #f6f6f6;
    font-weight: 700;
  }

  .reply td {
    height: 41px;
  }

  .reply:not(:last-child) td {
    border-bottom: 2px solid #8a8a8a;
  }

  .num {
    text-align: right;
  }

  .subject {
    display: flex;
    align-items: center;
    height: 18px;
    padding-left: 6px;
  }

  .markup .subject {
    gap: 7px;
    padding-left: 22px;
  }

  .markup .subject span {
    margin-left: -4px;
  }

  .reply .subject {
    gap: 7px;
    padding-left: 58px;
  }

  .total {
    margin-left: auto;
  }

  .ticks {
    stroke: #8a6ae0;
  }

  .faint {
    stroke: #77758a;
    stroke-width: 1;
  }

  .blue {
    stroke: #2a6fb0;
  }

  .swatch-cell {
    text-align: center;
  }

  .swatch {
    display: inline-block;
    width: 12px;
    height: 12px;
    margin-top: 2px;
  }

  .toolrail {
    display: flex;
    flex: none;
    flex-direction: column;
    align-items: center;
    width: 36px;
    padding-right: 2px;
    box-sizing: border-box;
  }

  .toolrail button {
    width: 34px;
    height: 36px;
  }

  .grip {
    width: 26px;
    margin: 6px 0 4px;
    border-top: 2px dotted #8a8a8a;
  }

  .status {
    display: flex;
    flex: none;
    align-items: center;
    height: 34px;
    padding-right: 32px;
    border-top: 1px solid #000;
    font-size: 15px;
  }

  .status__ready {
    flex: 1;
  }

  .status button {
    width: 36px;
    height: 34px;
  }

  .status .status__caret {
    width: 18px;
  }

  .status__scale {
    margin-left: 28px;
  }

  .status__size {
    margin-left: 30px;
  }

  .status__pos {
    margin-left: 54px;
  }
</style>
